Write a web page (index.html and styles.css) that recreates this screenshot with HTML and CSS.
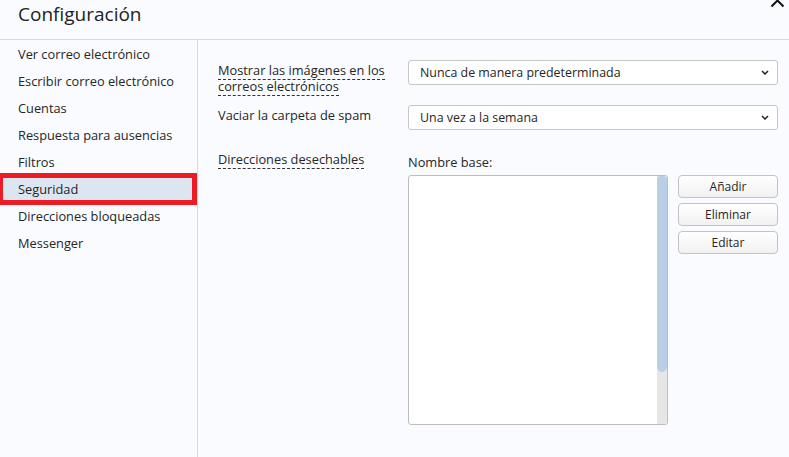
FILE: index.html
```html
<!DOCTYPE html>
<html lang="es">
<head>
    <meta charset="UTF-8">
    <meta name="viewport" content="width=device-width, initial-scale=1.0">
    <title>Configuración</title>
    <link rel="stylesheet" href="styles.css">
</head>
<body>
    <div class="header">
        <h1>Configuración</h1>
        <button class="close-button" title="Cerrar">
            <svg width="15" height="15" viewBox="0 0 15 15">
                <path d="M1.5 1.5 L13.5 13.5 M13.5 1.5 L1.5 13.5" stroke="#111" stroke-width="2" fill="none"/>
            </svg>
        </button>
    </div>

    <div class="layout">
        <ul class="sidebar">
            <li>Ver correo electrónico</li>
            <li>Escribir correo electrónico</li>
            <li>Cuentas</li>
            <li>Respuesta para ausencias</li>
            <li>Filtros</li>
            <li class="selected">Seguridad</li>
            <li>Direcciones bloqueadas</li>
            <li>Messenger</li>
        </ul>

        <div class="content">
            <div class="form-row">
                <div class="form-label"><span>Mostrar las imágenes en los correos electrónicos</span></div>
                <div class="select-box">
                    <span>Nunca de manera predeterminada</span>
                    <svg class="chevron" width="8" height="5" viewBox="0 0 8 5">
                        <path d="M1 1 L4 4 L7 1" stroke="#222" stroke-width="1.5" fill="none"/>
                    </svg>
                </div>
            </div>

            <div class="form-row">
                <div class="form-label">Vaciar la carpeta de spam</div>
                <div class="select-box">
                    <span>Una vez a la semana</span>
                    <svg class="chevron" width="8" height="5" viewBox="0 0 8 5">
                        <path d="M1 1 L4 4 L7 1" stroke="#222" stroke-width="1.5" fill="none"/>
                    </svg>
                </div>
            </div>

            <div class="form-row disposable">
                <div class="form-label"><span>Direcciones desechables</span></div>
                <div class="disposable-field">
                    <div class="field-caption">Nombre base:</div>
                    <div class="list-area">
                        <div class="list-box">
                            <div class="scroll-track">
                                <div class="scroll-thumb"></div>
                            </div>
                        </div>
                        <div class="list-buttons">
                            <button class="small-button">Añadir</button>
                            <button class="small-button">Eliminar</button>
                            <button class="small-button">Editar</button>
                        </div>
                    </div>
                </div>
            </div>
        </div>
    </div>
</body>
</html>
```

FILE: styles.css
```css
body {
    font-family: 'Open Sans', 'Noto Sans', sans-serif;
    font-size: 12.8px;
    margin: 0;
    padding: 0;
    background-color: #f9fbfe;
    color: #262626;
    height: 457px;
    overflow: hidden;
}

.header {
    position: relative;
    height: 39px;
    border-bottom: 1px solid #d3dce6;
    padding-left: 18px;
}

.header h1 {
    margin: 0;
    padding-top: 1px;
    font-size: 19px;
    font-weight: normal;
    line-height: 26px;
    color: #222;
}

.close-button {
    position: absolute;
    top: -7px;
    right: 4px;
    border: none;
    background: none;
    padding: 0;
    width: 15px;
    height: 15px;
}

.layout {
    display: flex;
    height: 417px;
}

.sidebar {
    list-style: none;
    margin: 0;
    padding: 1px 0 0 0;
    width: 197px;
    flex-shrink: 0;
    border-right: 1px solid #d3dce6;
}

.sidebar li {
    height: 27px;
    line-height: 27px;
    padding-left: 18px;
}

.sidebar li.selected {
    position: relative;
    background-color: #dce6f0;
}

.sidebar li.selected::after {
    content: "";
    position: absolute;
    top: -3px;
    bottom: -2px;
    left: 0;
    right: 0;
    border: 5px solid #ec1c24;
    border-left-width: 3px;
}

.content {
    flex: 1;
    padding: 20px 12px 0 20px;
}

.form-row {
    display: flex;
    margin-bottom: 11px;
}

.form-label {
    width: 172px;
    flex-shrink: 0;
    margin-right: 18px;
    padding-top: 2px;
    line-height: 16px;
}

.form-label span {
    border-bottom: 1px dashed #333;
}

.select-box {
    flex: 1;
    height: 23px;
    display: flex;
    align-items: center;
    justify-content: space-between;
    padding: 0 8px 0 11px;
    font-size: 12.4px;
    background: white;
    border: 1px solid #c6c6c6;
    border-radius: 3px;
}

.disposable {
    margin-top: 21px;
}

.disposable .form-label {
    padding-top: 0;
}

.field-caption {
    padding-top: 3px;
    line-height: 16px;
    margin-bottom: 5px;
}

.list-area {
    display: flex;
    align-items: flex-start;
}

.list-box {
    width: 258px;
    height: 248px;
    background: white;
    border: 1px solid #bdbdbd;
    border-radius: 3px;
    display: flex;
    justify-content: flex-end;
    overflow: hidden;
}

.scroll-track {
    width: 10px;
    background: #e6e6e6;
}

.scroll-thumb {
    height: 196px;
    background: #b8cfe6;
    border-radius: 4px 4px 5px 5px;
}

.list-buttons {
    display: flex;
    flex-direction: column;
    gap: 5px;
    margin-left: 10px;
    width: 100px;
}

.small-button {
    height: 23px;
    font-family: inherit;
    font-size: 12px;
    color: #262626;
    background: linear-gradient(#ffffff, #f1f1f1);
    border: 1px solid #c3c3c3;
    border-radius: 4px;
    padding: 0;
}
```
